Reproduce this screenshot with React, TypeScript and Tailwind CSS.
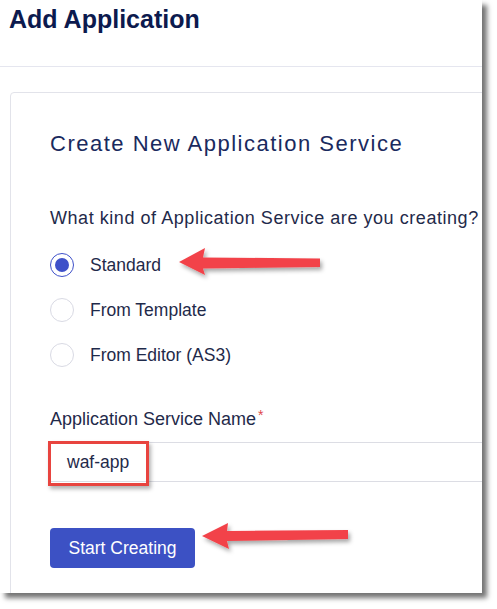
import React from "react";

const options = [
  { label: "Standard", checked: true },
  { label: "From Template", checked: false },
  { label: "From Editor (AS3)", checked: false },
];

function Arrow({ points }: { points: string }) {
  return (
    <polygon points={points} fill="#f2434a" filter="url(#arrowShadow)" />
  );
}

export default function App() {
  return (
    <div
      className="w-[497px] h-[609px] bg-white"
      style={{ fontFamily: '"Liberation Sans", Arial, sans-serif' }}
    >
      <div className="relative w-[482px] h-[593px] bg-white overflow-hidden shadow-[5px_5px_5px_rgba(0,0,0,0.55)]">
        <div className="h-[67px] border-b border-[#e5e6ef] px-[9px] pt-[4px]">
          <h1 className="text-[25px] leading-[30px] font-bold text-[#0c1a4e]">
            Add Application
          </h1>
        </div>

        <div className="mt-[25px] ml-[10px] w-[520px] h-[540px] rounded-[4px] border border-[#e2e3ea] pl-[39px] pt-[38px]">
          <h2 className="text-[22px] leading-[26px] tracking-[1.5px] text-[#1a2a5e]">
            Create New Application Service
          </h2>

          <p className="mt-[49px] text-[18px] leading-[24px] tracking-[0.55px] text-[#1f2a4a]">
            What kind of Application Service are you creating?
          </p>

          <div className="mt-[12px] flex flex-col">
            {options.map(({ label, checked }) => (
              <div key={label} className="h-[45px] flex items-center gap-[16px]">
                {checked ? (
                  <span className="w-[24px] h-[24px] rounded-full border-[1.5px] border-[#3f51c9] flex items-center justify-center">
                    <span className="w-[14px] h-[14px] rounded-full bg-[#3f51c9]" />
                  </span>
                ) : (
                  <span className="w-[24px] h-[24px] rounded-full border border-[#d9dae4] bg-white" />
                )}
                <span className="text-[17.5px] leading-[24px] text-[#1f2a4a]">
                  {label}
                </span>
              </div>
            ))}
          </div>

          <div className="mt-[30px] flex items-start text-[18px] leading-[24px] text-[#1f2a4a]">
            Application Service Name
            <span className="ml-[2px] text-[14px] leading-[16px] text-[#e0484a]">*</span>
          </div>

          <div className="mt-[11px] h-[40px] border border-[#dcdde4] flex items-center pl-[16px] text-[17.5px] text-[#1f2a4a]">
            waf-app
          </div>

          <button className="mt-[46px] w-[145px] h-[40px] rounded-[4px] bg-[#3c51c4] text-white text-[17.5px]">
            Start Creating
          </button>
        </div>

        <div className="absolute left-[48px] top-[441px] w-[101px] h-[45px] border-[3px] border-[#e8443f] shadow-[2px_3px_4px_rgba(0,0,0,0.3)]" />

        <svg className="absolute inset-0 pointer-events-none" width="482" height="593">
          <defs>
            <filter id="arrowShadow" x="-10%" y="-50%" width="130%" height="220%">
              <feDropShadow dx="2" dy="3" stdDeviation="2" floodColor="#000" floodOpacity="0.35" />
            </filter>
          </defs>
          <Arrow points="179,262 205,248 203,257.5 320,258.5 320,267 203,268.5 205,275" />
          <Arrow points="202,536 228,523 227,531 348,530 348,539 227,541 229,549" />
        </svg>
      </div>
    </div>
  );
}
